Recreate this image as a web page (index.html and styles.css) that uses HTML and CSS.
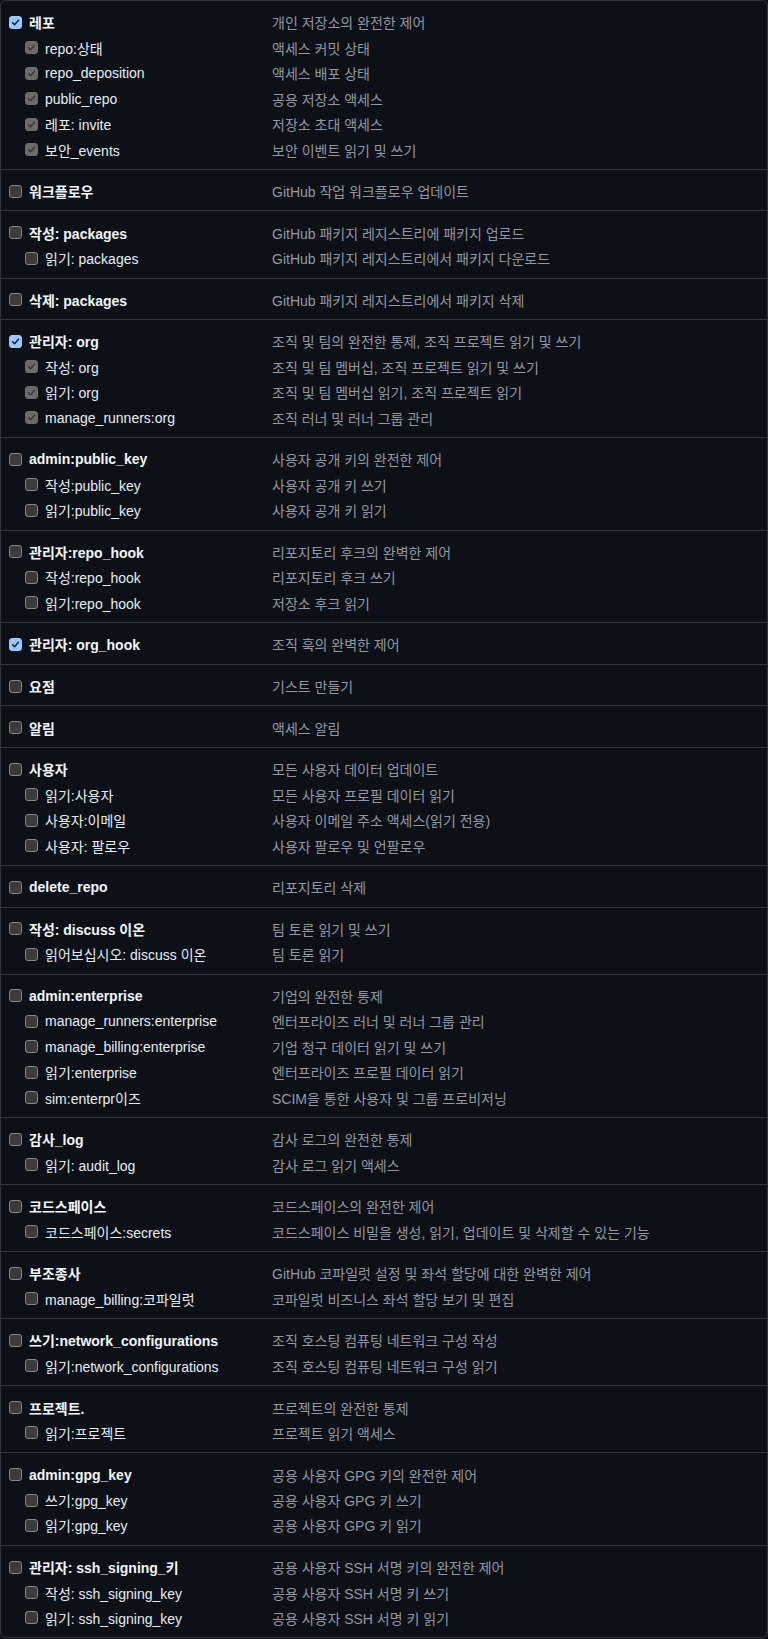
FILE: index.html
```html
<!DOCTYPE html>
<html lang="ko">
<head>
<meta charset="utf-8">
<title>Scopes</title>
<link rel="stylesheet" href="styles.css">
</head>
<body>
<div class="scopes">

  <div class="group">
    <div class="row top"><div class="name"><span class="cb on"><svg viewBox="0 0 13 13"><path d="M3 6.8 5.4 9.2 10 3.8"/></svg></span>레포</div><div class="desc">개인 저장소의 완전한 제어</div></div>
    <div class="row sub"><div class="name"><span class="cb dis"><svg viewBox="0 0 13 13"><path d="M3 6.8 5.4 9.2 10 3.8"/></svg></span>repo:상태</div><div class="desc">액세스 커밋 상태</div></div>
    <div class="row sub"><div class="name"><span class="cb dis"><svg viewBox="0 0 13 13"><path d="M3 6.8 5.4 9.2 10 3.8"/></svg></span>repo_deposition</div><div class="desc">액세스 배포 상태</div></div>
    <div class="row sub"><div class="name"><span class="cb dis"><svg viewBox="0 0 13 13"><path d="M3 6.8 5.4 9.2 10 3.8"/></svg></span>public_repo</div><div class="desc">공용 저장소 액세스</div></div>
    <div class="row sub"><div class="name"><span class="cb dis"><svg viewBox="0 0 13 13"><path d="M3 6.8 5.4 9.2 10 3.8"/></svg></span>레포: invite</div><div class="desc">저장소 초대 액세스</div></div>
    <div class="row sub"><div class="name"><span class="cb dis"><svg viewBox="0 0 13 13"><path d="M3 6.8 5.4 9.2 10 3.8"/></svg></span>보안_events</div><div class="desc">보안 이벤트 읽기 및 쓰기</div></div>
  </div>

  <div class="group">
    <div class="row top"><div class="name"><span class="cb"></span>워크플로우</div><div class="desc">GitHub 작업 워크플로우 업데이트</div></div>
  </div>

  <div class="group">
    <div class="row top"><div class="name"><span class="cb"></span>작성: packages</div><div class="desc">GitHub 패키지 레지스트리에 패키지 업로드</div></div>
    <div class="row sub"><div class="name"><span class="cb"></span>읽기: packages</div><div class="desc">GitHub 패키지 레지스트리에서 패키지 다운로드</div></div>
  </div>

  <div class="group">
    <div class="row top"><div class="name"><span class="cb"></span>삭제: packages</div><div class="desc">GitHub 패키지 레지스트리에서 패키지 삭제</div></div>
  </div>

  <div class="group">
    <div class="row top"><div class="name"><span class="cb on"><svg viewBox="0 0 13 13"><path d="M3 6.8 5.4 9.2 10 3.8"/></svg></span>관리자: org</div><div class="desc">조직 및 팀의 완전한 통제, 조직 프로젝트 읽기 및 쓰기</div></div>
    <div class="row sub"><div class="name"><span class="cb dis"><svg viewBox="0 0 13 13"><path d="M3 6.8 5.4 9.2 10 3.8"/></svg></span>작성: org</div><div class="desc">조직 및 팀 멤버십, 조직 프로젝트 읽기 및 쓰기</div></div>
    <div class="row sub"><div class="name"><span class="cb dis"><svg viewBox="0 0 13 13"><path d="M3 6.8 5.4 9.2 10 3.8"/></svg></span>읽기: org</div><div class="desc">조직 및 팀 멤버십 읽기, 조직 프로젝트 읽기</div></div>
    <div class="row sub"><div class="name"><span class="cb dis"><svg viewBox="0 0 13 13"><path d="M3 6.8 5.4 9.2 10 3.8"/></svg></span>manage_runners:org</div><div class="desc">조직 러너 및 러너 그룹 관리</div></div>
  </div>

  <div class="group">
    <div class="row top"><div class="name"><span class="cb"></span>admin:public_key</div><div class="desc">사용자 공개 키의 완전한 제어</div></div>
    <div class="row sub"><div class="name"><span class="cb"></span>작성:public_key</div><div class="desc">사용자 공개 키 쓰기</div></div>
    <div class="row sub"><div class="name"><span class="cb"></span>읽기:public_key</div><div class="desc">사용자 공개 키 읽기</div></div>
  </div>

  <div class="group">
    <div class="row top"><div class="name"><span class="cb"></span>관리자:repo_hook</div><div class="desc">리포지토리 후크의 완벽한 제어</div></div>
    <div class="row sub"><div class="name"><span class="cb"></span>작성:repo_hook</div><div class="desc">리포지토리 후크 쓰기</div></div>
    <div class="row sub"><div class="name"><span class="cb"></span>읽기:repo_hook</div><div class="desc">저장소 후크 읽기</div></div>
  </div>

  <div class="group">
    <div class="row top"><div class="name"><span class="cb on"><svg viewBox="0 0 13 13"><path d="M3 6.8 5.4 9.2 10 3.8"/></svg></span>관리자: org_hook</div><div class="desc">조직 훅의 완벽한 제어</div></div>
  </div>

  <div class="group">
    <div class="row top"><div class="name"><span class="cb"></span>요점</div><div class="desc">기스트 만들기</div></div>
  </div>

  <div class="group">
    <div class="row top"><div class="name"><span class="cb"></span>알림</div><div class="desc">액세스 알림</div></div>
  </div>

  <div class="group">
    <div class="row top"><div class="name"><span class="cb"></span>사용자</div><div class="desc">모든 사용자 데이터 업데이트</div></div>
    <div class="row sub"><div class="name"><span class="cb"></span>읽기:사용자</div><div class="desc">모든 사용자 프로필 데이터 읽기</div></div>
    <div class="row sub"><div class="name"><span class="cb"></span>사용자:이메일</div><div class="desc">사용자 이메일 주소 액세스(읽기 전용)</div></div>
    <div class="row sub"><div class="name"><span class="cb"></span>사용자: 팔로우</div><div class="desc">사용자 팔로우 및 언팔로우</div></div>
  </div>

  <div class="group">
    <div class="row top"><div class="name"><span class="cb"></span>delete_repo</div><div class="desc">리포지토리 삭제</div></div>
  </div>

  <div class="group">
    <div class="row top"><div class="name"><span class="cb"></span>작성: discuss 이온</div><div class="desc">팀 토론 읽기 및 쓰기</div></div>
    <div class="row sub"><div class="name"><span class="cb"></span>읽어보십시오: discuss 이온</div><div class="desc">팀 토론 읽기</div></div>
  </div>

  <div class="group">
    <div class="row top"><div class="name"><span class="cb"></span>admin:enterprise</div><div class="desc">기업의 완전한 통제</div></div>
    <div class="row sub"><div class="name"><span class="cb"></span>manage_runners:enterprise</div><div class="desc">엔터프라이즈 러너 및 러너 그룹 관리</div></div>
    <div class="row sub"><div class="name"><span class="cb"></span>manage_billing:enterprise</div><div class="desc">기업 청구 데이터 읽기 및 쓰기</div></div>
    <div class="row sub"><div class="name"><span class="cb"></span>읽기:enterprise</div><div class="desc">엔터프라이즈 프로필 데이터 읽기</div></div>
    <div class="row sub"><div class="name"><span class="cb"></span>sim:enterpr이즈</div><div class="desc">SCIM을 통한 사용자 및 그룹 프로비저닝</div></div>
  </div>

  <div class="group">
    <div class="row top"><div class="name"><span class="cb"></span>감사_log</div><div class="desc">감사 로그의 완전한 통제</div></div>
    <div class="row sub"><div class="name"><span class="cb"></span>읽기: audit_log</div><div class="desc">감사 로그 읽기 액세스</div></div>
  </div>

  <div class="group">
    <div class="row top"><div class="name"><span class="cb"></span>코드스페이스</div><div class="desc">코드스페이스의 완전한 제어</div></div>
    <div class="row sub"><div class="name"><span class="cb"></span>코드스페이스:secrets</div><div class="desc">코드스페이스 비밀을 생성, 읽기, 업데이트 및 삭제할 수 있는 기능</div></div>
  </div>

  <div class="group">
    <div class="row top"><div class="name"><span class="cb"></span>부조종사</div><div class="desc">GitHub 코파일럿 설정 및 좌석 할당에 대한 완벽한 제어</div></div>
    <div class="row sub"><div class="name"><span class="cb"></span>manage_billing:코파일럿</div><div class="desc">코파일럿 비즈니스 좌석 할당 보기 및 편집</div></div>
  </div>

  <div class="group">
    <div class="row top"><div class="name"><span class="cb"></span>쓰기:network_configurations</div><div class="desc">조직 호스팅 컴퓨팅 네트워크 구성 작성</div></div>
    <div class="row sub"><div class="name"><span class="cb"></span>읽기:network_configurations</div><div class="desc">조직 호스팅 컴퓨팅 네트워크 구성 읽기</div></div>
  </div>

  <div class="group">
    <div class="row top"><div class="name"><span class="cb"></span>프로젝트.</div><div class="desc">프로젝트의 완전한 통제</div></div>
    <div class="row sub"><div class="name"><span class="cb"></span>읽기:프로젝트</div><div class="desc">프로젝트 읽기 액세스</div></div>
  </div>

  <div class="group">
    <div class="row top"><div class="name"><span class="cb"></span>admin:gpg_key</div><div class="desc">공용 사용자 GPG 키의 완전한 제어</div></div>
    <div class="row sub"><div class="name"><span class="cb"></span>쓰기:gpg_key</div><div class="desc">공용 사용자 GPG 키 쓰기</div></div>
    <div class="row sub"><div class="name"><span class="cb"></span>읽기:gpg_key</div><div class="desc">공용 사용자 GPG 키 읽기</div></div>
  </div>

  <div class="group">
    <div class="row top"><div class="name"><span class="cb"></span>관리자: ssh_signing_키</div><div class="desc">공용 사용자 SSH 서명 키의 완전한 제어</div></div>
    <div class="row sub"><div class="name"><span class="cb"></span>작성: ssh_signing_key</div><div class="desc">공용 사용자 SSH 서명 키 쓰기</div></div>
    <div class="row sub"><div class="name"><span class="cb"></span>읽기: ssh_signing_key</div><div class="desc">공용 사용자 SSH 서명 키 읽기</div></div>
  </div>

</div>
</body>
</html>
```

FILE: styles.css
```css
html, body {
  margin: 0;
  padding: 0;
  background: #0d1117;
}

body {
  font-family: "Liberation Sans", "Noto Sans CJK KR", sans-serif;
  font-size: 14px;
  color: #e6edf3;
}

.scopes {
  border: 1px solid #30363d;
  border-radius: 6px;
  overflow: hidden;
}

.group {
  padding: 8.6px 0 6.6px;
  border-top: 1px solid #30363d;
}

.group:first-child {
  border-top: 0;
}

.row {
  display: grid;
  grid-template-columns: 271px 1fr;
  align-items: center;
  height: 25.45px;
}

.name {
  display: flex;
  align-items: center;
  gap: 7px;
  padding-left: 8px;
  white-space: nowrap;
  color: #e6edf3;
}

.sub .name {
  padding-left: 24px;
}

.top .name {
  font-weight: 700;
  color: #f0f6fc;
}

.desc {
  color: #9198a1;
  white-space: nowrap;
}

.cb {
  flex: none;
  width: 13px;
  height: 13px;
  box-sizing: border-box;
  border: 1px solid #858585;
  border-radius: 3px;
  background: #3b3b3b;
  display: flex;
  align-items: center;
  justify-content: center;
}

.cb svg {
  width: 13px;
  height: 13px;
  fill: none;
  stroke-width: 1.8;
  stroke-linecap: round;
  stroke-linejoin: round;
}

.cb.on {
  background: #99c8ff;
  border-color: #99c8ff;
}

.cb.on svg {
  stroke: #1b2430;
}

.cb.dis {
  background: #6b6b6b;
  border-color: #6b6b6b;
}

.cb.dis svg {
  stroke: #3a3a3a;
}
```
